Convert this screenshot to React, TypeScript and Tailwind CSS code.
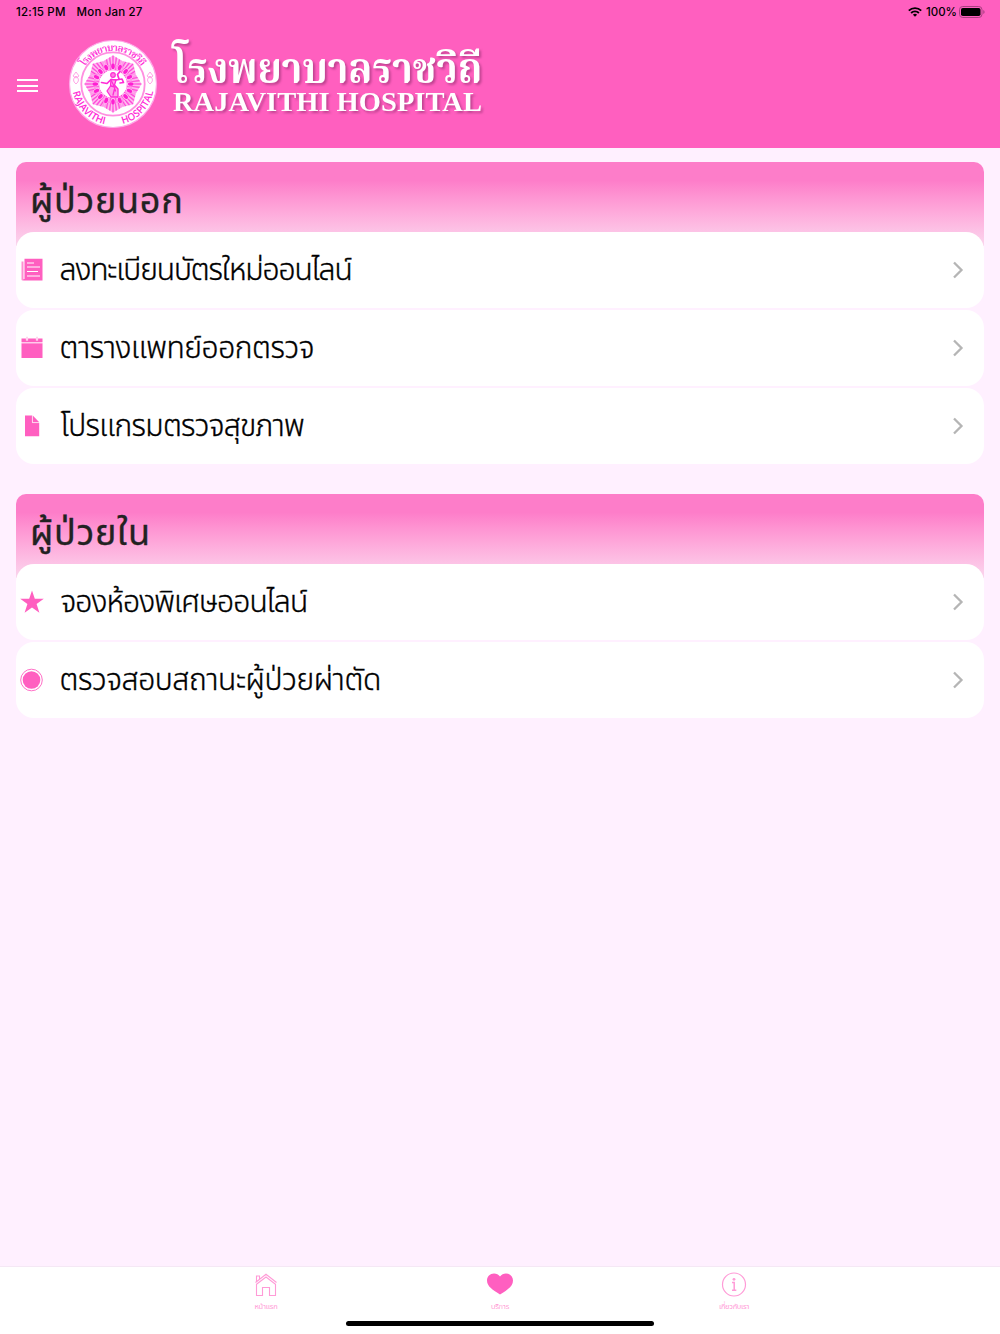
import React from "react";

type IconProps = { className?: string };

const NewspaperIcon = ({ className }: IconProps) => (
  <svg className={className} viewBox="0 0 24 24" fill="#ff5fc0">
    <path d="M1.5 3.5h2v19h-1a1 1 0 0 1-1-1z" fill="#ff8fd2" />
    <path d="M4.5 .8h18v21.7h-19.2V21h1.2z" />
    <path d="M7 5h7M7 9h13M7 13.5h11M7 18h13" stroke="#fff" strokeWidth="1" />
  </svg>
);

const CalendarIcon = ({ className }: IconProps) => (
  <svg className={className} viewBox="0 0 24 24" fill="#ff5fc0">
    <path d="M1.5 2.5h21v3.6h-21zM1.5 7.2h21v14.8h-21z" />
    <path d="M1.5 6.1h21v1.1h-21z" fill="#ffc4e8" />
    <path d="M7 1v3.5M17 1v3.5" stroke="#fff" strokeWidth="2.2" />
    <path d="M7 .8v3.3M17 .8v3.3" stroke="#ff8fd2" strokeWidth=".8" />
  </svg>
);

const DocumentIcon = ({ className }: IconProps) => (
  <svg className={className} viewBox="0 0 24 24" fill="#ff5fc0">
    <path d="M5 1.5h7V9h7.2v13.2H5z" />
    <path d="M13 1.7 19 8h-6z" />
    <path d="M12.4 1.5v7.1h6.8" fill="none" stroke="#ffc4e8" strokeWidth=".9" />
  </svg>
);

const StarIcon = ({ className }: IconProps) => (
  <svg className={className} viewBox="0 0 24 24" fill="#ff5fc0">
    <path d="M12 .5 14.800 8.800h9l-7.200 5.200 2.800 8.700-7.400-5.300-7.400 5.300 2.800-8.700L.2 8.800h9z" />
  </svg>
);

const RecordIcon = ({ className }: IconProps) => (
  <svg className={className} viewBox="0 0 24 24">
    <circle cx="11.500" cy="12" r="10.8" fill="none" stroke="#ff5fc0" strokeWidth=".9" />
    <circle cx="11.500" cy="12" r="8.8" fill="#ff5fc0" />
  </svg>
);

const petals = Array.from({ length: 16 }, (_, i) => i * 22.5);
const octants = Array.from({ length: 8 }, (_, i) => i * 45);

const HospitalSeal = () => (
  <svg className="h-[90px] w-[90px]" viewBox="-45 -45 90 90">
    <defs>
      <path id="seal-top" d="M-33 0a33 33 0 0 1 66 0" />
      <path id="seal-bottom" d="M-41 0a41 41 0 0 0 82 0" />
    </defs>
    <circle r="43.5" fill="#fff" stroke="#ffa8e8" strokeWidth="1.2" />
    <circle r="31.7" fill="none" stroke="#ff8fe0" strokeWidth="1.8" />
    {/* eight pointed star of fine rays around the dancer */}
    {octants.map((angle) => (
      <g key={angle} transform={`rotate(${angle})`}>
        <path d="M0-28.500 9.500-22.900 5.400-13h-10.800l-4.100-9.900z" fill="#ff9ae8" />
        <path
          d="M0-13V-28.500M2-13 3.300-26.500M-2-13-3.300-26.500M4.300-13 6.500-24.500M-4.300-13-6.500-24.500"
          stroke="#ff45d8"
          strokeWidth="1"
        />
        <path d="M1-19 1.700-27.500M-1-19-1.700-27.500M3.600-19 5-25.500M-3.600-19-5-25.500" stroke="#fff" strokeWidth=".4" />
      </g>
    ))}
    {petals.map((angle) => (
      <g key={angle} transform={`rotate(${angle})`}>
        <ellipse cy="-17.500" rx="2.500" ry="3.600" fill="#ffc0f2" />
        <ellipse cy="-17.800" rx="1.800" ry="2.900" fill="#ff1fd2" />
      </g>
    ))}
    <circle r="13.8" fill="#fff" />
    <g stroke="#ff2bd6" strokeLinecap="round" strokeLinejoin="round" fill="none">
      <path d="M-11.500-1.500-6-.5-2-4.500 3-4 9-5 10.500-1.500 7-1M6-5 4.500-9.500 7-12.500" strokeWidth="1.700" />
      <path d="M-2-4.500 3-4 1.500 1 5 5 5 13H-2L-6 7-2.500 2z" fill="#ffa0ea" strokeWidth="1.300" />
      <path d="M-2 2 2 3 0 11M-1.500-3 .5 1 2.500 7" strokeWidth="1.300" />
      <circle cx="0" cy="-9" r="2.300" fill="#ff7be0" strokeWidth="1.200" />
    </g>
    <g fill="none" stroke="#ff8fe0" strokeWidth=".8">
      <path d="M-37-8q-5 4 0 8 5-4 0-8zm0-4-3 4 3 2 3-2zM37-8q5 4 0 8-5-4 0-8zm0-4 3 4-3 2-3-2z" />
    </g>
    <text fill="#ff2bd6" fontSize="10" fontFamily="'Noto Serif Thai', 'Liberation Serif', serif" fontWeight="600">
      <textPath href="#seal-top" startOffset="50%" textAnchor="middle" textLength="67">โรงพยาบาลราชวิถี</textPath>
    </text>
    <text fill="#ff2bd6" fontSize="10" fontWeight="600" fontFamily="'Open Sans', 'Liberation Sans', sans-serif">
      <textPath href="#seal-bottom" startOffset="8" textLength="48" lengthAdjust="spacingAndGlyphs">RAJAVITHI</textPath>
    </text>
    <text fill="#ff2bd6" fontSize="10" fontWeight="600" fontFamily="'Open Sans', 'Liberation Sans', sans-serif">
      <textPath href="#seal-bottom" startOffset="74" textLength="47" lengthAdjust="spacingAndGlyphs">HOSPITAL</textPath>
    </text>
  </svg>
);

const StatusBar = () => (
  <div className="flex h-6 items-center justify-between pl-4 pr-[15px] text-[11.5px] font-medium text-black">
    <div className="flex gap-[11px] pt-px tracking-[0.18px]">
      <span>12:15 PM</span>
      <span>Mon Jan 27</span>
    </div>
    <div className="flex items-center">
      <svg className="mr-1 h-[10px] w-[14px]" viewBox="0 0 14 10" fill="none" stroke="#000" strokeWidth="1.9">
        <path d="M.8 3.6a9 9 0 0 1 12.4 0M3.1 6a5.6 5.6 0 0 1 7.8 0" />
        <path d="M7 9.8 4.900 7.700a3 3 0 0 1 4.200 0z" fill="#000" stroke="none" />
      </svg>
      <span className="pt-px">100%</span>
      <svg className="ml-[2px] h-[12px] w-[26px]" viewBox="0 0 26 12">
        <rect x=".5" y=".5" width="22.5" height="11" rx="3.2" fill="none" stroke="#a93f80" />
        <rect x="2" y="2" width="19.5" height="8" rx="1.8" />
        <path d="M24.3 4v4q1.3-.6 1.3-2t-1.3-2z" fill="#a93f80" />
      </svg>
    </div>
  </div>
);

const Header = () => (
  <header className="h-[148px] bg-[#ff5fbf]">
    <StatusBar />
    <div className="flex pl-[17px] pt-[15px]">
      <button className="mt-10 flex h-[13px] w-[21px] flex-col justify-between" aria-label="menu">
        <span className="h-[2px] w-full bg-white" />
        <span className="h-[2px] w-full bg-white" />
        <span className="h-[2px] w-full bg-white" />
      </button>
      <div className="ml-[30px]">
        <HospitalSeal />
      </div>
      <svg
        className="ml-3 h-[90px] w-[330px] overflow-visible drop-shadow-[2px_2px_1px_rgba(130,40,100,0.5)]"
        viewBox="170 39 330 90"
        fill="#fff"
      >
        <text x="172.500" y="82.500" fontSize="42" fontWeight="700" textLength="310" lengthAdjust="spacingAndGlyphs" fontFamily="'Noto Serif Thai', 'Liberation Serif', serif">
          โรงพยาบาลราชวิถี
        </text>
        <text x="173" y="111" fontSize="27.500" fontWeight="700" textLength="309" lengthAdjust="spacingAndGlyphs" fontFamily="'Liberation Serif', serif">
          RAJAVITHI HOSPITAL
        </text>
      </svg>
    </div>
  </header>
);

type Service = { label: string; icon: React.FC<IconProps>; tracking: string };

const outpatient: Service[] = [
  { label: "ลงทะเบียนบัตรใหม่ออนไลน์", icon: NewspaperIcon, tracking: "tracking-[-1.1px]" },
  { label: "ตารางแพทย์ออกตรวจ", icon: CalendarIcon, tracking: "tracking-[-0.43px]" },
  { label: "โปรแกรมตรวจสุขภาพ", icon: DocumentIcon, tracking: "tracking-[-0.7px] pl-px" },
];

const inpatient: Service[] = [
  { label: "จองห้องพิเศษออนไลน์", icon: StarIcon, tracking: "tracking-[-0.9px] pl-px" },
  { label: "ตรวจสอบสถานะผู้ป่วยผ่าตัด", icon: RecordIcon, tracking: "tracking-[-0.4px]" },
];

const ServiceRow = ({ label, icon: Icon, tracking }: Service) => (
  <li className="flex h-[76px] items-center rounded-[18px] bg-white pl-1 pr-5">
    <Icon className="h-6 w-6" />
    <span
      className={`mb-[2px] ml-[15.5px] flex-1 whitespace-nowrap text-[30px] leading-none font-light text-black [-webkit-text-stroke:0.35px_black] ${tracking}`}
    >
      {label}
    </span>
    <svg className="h-[18px] w-3" viewBox="0 0 12 18" fill="none" stroke="#b5b5b5" strokeWidth="2.3">
      <path d="m2 1.500 7.500 7.500L2 16.500" />
    </svg>
  </li>
);

const ServiceGroup = ({ title, items }: { title: string; items: Service[] }) => (
  <section>
    <div className="h-[84px] rounded-t-[10px] bg-linear-to-b from-[#fd7dc9] from-22% to-[#fad6ee] pl-[14px] pt-[13px]">
      <h2 className="whitespace-nowrap text-[36px] leading-[50px] tracking-[0.7px] text-[#222] [-webkit-text-stroke:0.3px_#222]">{title}</h2>
    </div>
    <ul className="-mt-[14px] flex flex-col gap-[2px]">
      {items.map((item) => (
        <ServiceRow key={item.label} {...item} />
      ))}
    </ul>
  </section>
);

const TabBar = () => (
  <nav className="h-[68px] border-t border-[#f5e8f5] bg-white">
    <div className="mx-auto flex w-[702px] pt-[5px] text-[7.5px] leading-[8px]">
      <div className="flex flex-1 flex-col items-center text-[#ff9bd7]">
        <svg className="h-[26px] w-[26px]" viewBox="0 0 26 26" fill="none" stroke="currentColor" strokeWidth="1.1">
          <path d="M2.500 10.500 13 2.200l10.500 8.300M3.500 9.300V4h3v3M3.500 12.200 13 5l9.500 7.200V23.500h-6v-8h-7v8h-6z" />
        </svg>
        <span className="mt-[5px] tracking-[-0.2px]">หน้าแรก</span>
      </div>
      <div className="flex flex-1 flex-col items-center text-[#ff5fc0]">
        <svg className="h-[26px] w-[28px]" viewBox="0 0 28 26" fill="currentColor">
          <path d="M14 4.500C12.500 2.500 10.500 1.500 8 1.500 4 1.500 1 4.500 1 8.500c0 6 6 9.500 13 14 7-4.500 13-8 13-14 0-4-3-7-7-7-2.500 0-4.500 1-6 3z" />
        </svg>
        <span className="mt-[5px] font-light tracking-[-0.2px]">บริการ</span>
      </div>
      <div className="flex flex-1 flex-col items-center text-[#ff9bd7]">
        <svg className="h-[26px] w-[26px]" viewBox="0 0 26 26" fill="none" stroke="currentColor" strokeWidth="1.2">
          <circle cx="13" cy="12.500" r="11.500" />
          <path d="M11 10.500h2.200v7.500M11 18.200h4.300" strokeWidth="1.500" />
          <circle cx="13" cy="7.300" r="1.400" fill="currentColor" stroke="none" />
        </svg>
        <span className="mt-[5px] tracking-[-0.3px]">เกี่ยวกับเรา</span>
      </div>
    </div>
    <div className="mx-auto mt-[10px] h-[5px] w-[308px] rounded-full bg-black" />
  </nav>
);

export default function App() {
  return (
    <div className="flex h-[1334px] w-[1000px] flex-col overflow-hidden bg-[#fff0ff] font-[Inter,'Noto_Sans_Thai',sans-serif]">
      <Header />
      <main className="flex flex-1 flex-col gap-[30px] px-4 pt-[14px]">
        <ServiceGroup title="ผู้ป่วยนอก" items={outpatient} />
        <ServiceGroup title="ผู้ป่วยใน" items={inpatient} />
      </main>
      <TabBar />
    </div>
  );
}
